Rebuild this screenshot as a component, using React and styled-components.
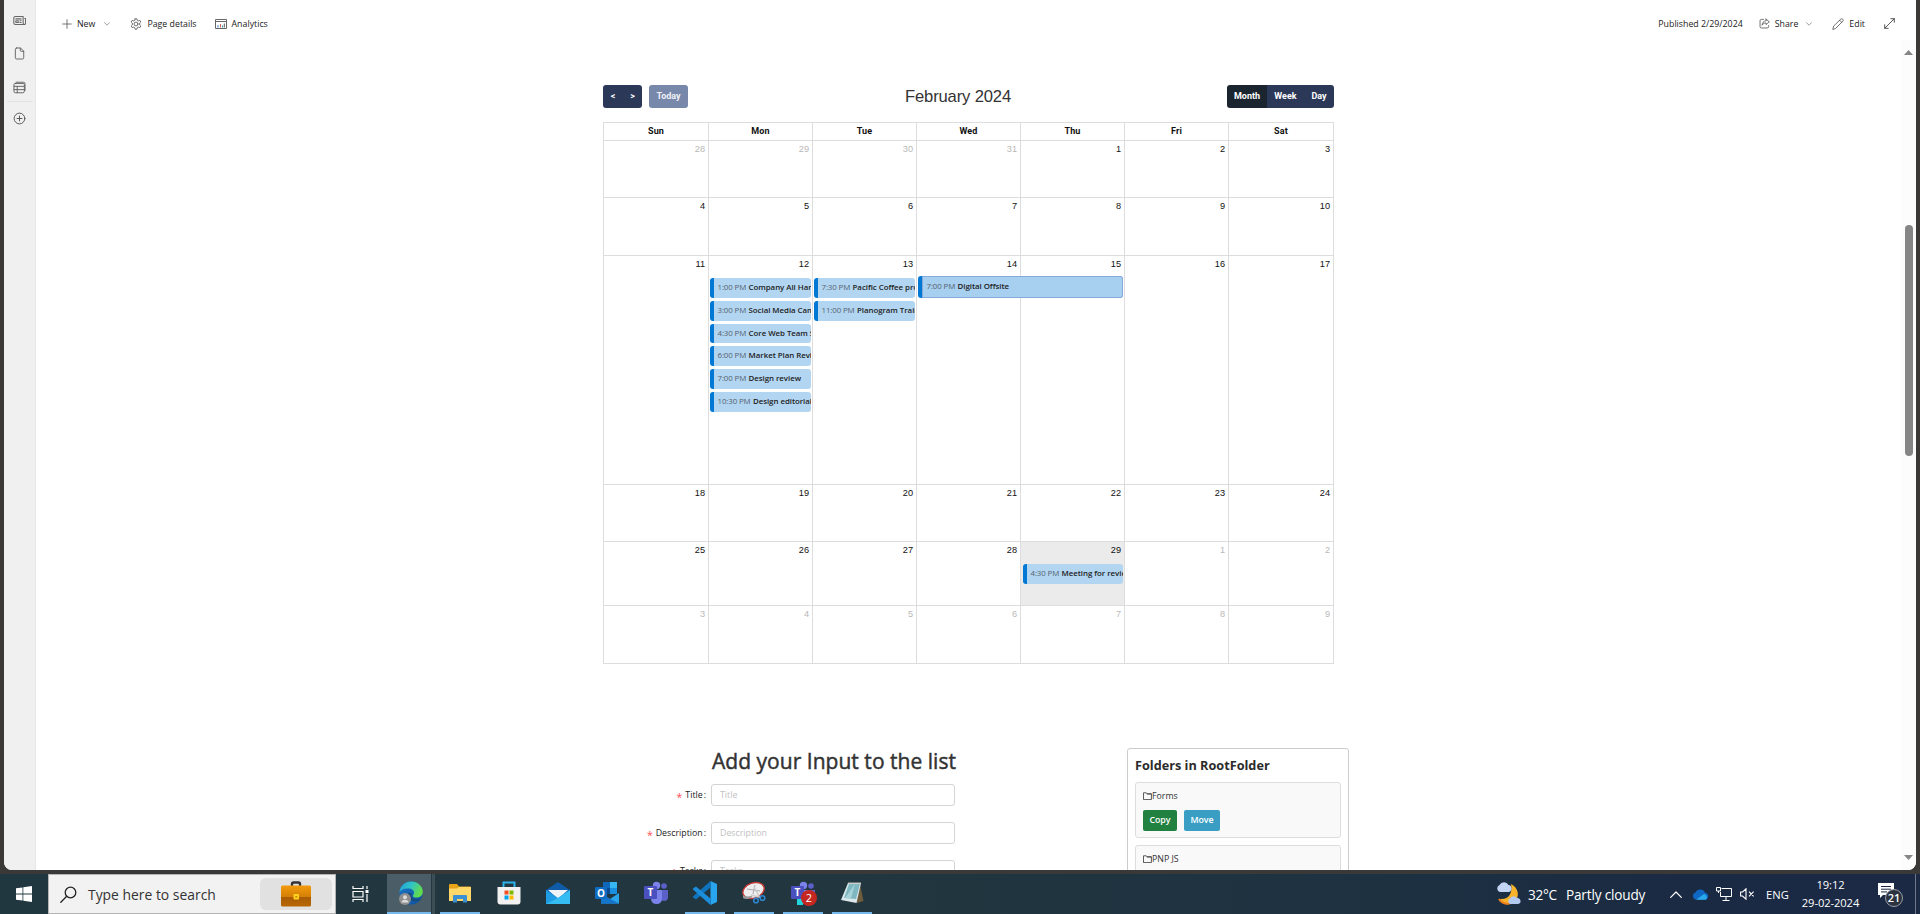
import React from 'react';
import styled, { createGlobalStyle, css } from 'styled-components';

const ui = '"Open Sans", "Noto Sans", sans-serif';
const arial = '"Liberation Sans", Arial, sans-serif';

const Global = createGlobalStyle`
  * { box-sizing: border-box; }
  body { margin: 0; background: #3a3938; font-family: ${ui}; overflow: hidden; }
  button, input { font-family: inherit; margin: 0; }
  svg { display: block; flex: none; }
`;

const Screen = styled.div`
  width: 1920px;
  height: 914px;
  display: flex;
  flex-direction: column;
  background: #3a3938;
  overflow: hidden;
`;

const BrowserWindow = styled.div`
  height: 870px;
  margin: 0 4px 4px;
  display: flex;
  background: #fff;
  border-radius: 0 0 8px 8px;
  overflow: hidden;
  flex: none;
`;

const AppBar = styled.nav`
  width: 32px;
  background: #f0f0f0;
  border-right: 1px solid #e6e6e6;
  display: flex;
  flex-direction: column;
  align-items: center;
`;

const AppBarItem = styled.span`
  height: ${(p) => p.$h}px;
  width: 26px;
  display: flex;
  align-items: center;
  justify-content: center;
  padding-top: ${(p) => (p.$line ? 6 : 0)}px;
  border-bottom: ${(p) => (p.$line ? '1px solid #e2e2e2' : '0')};
`;

const Main = styled.div`
  flex: 1;
  display: flex;
  flex-direction: column;
  min-width: 0;
`;

const CommandBar = styled.header`
  height: 40px;
  flex: none;
  padding: 7px 21px 0 26px;
  display: flex;
  align-items: center;
  justify-content: space-between;
  font-size: 8.8px;
  color: #222;
`;

const CommandGroup = styled.div`
  display: flex;
  align-items: center;
`;

const Command = styled.span`
  display: flex;
  align-items: center;
  gap: 5px;
  margin-left: ${(p) => p.$ml || 0}px;
  white-space: nowrap;
`;

const Body = styled.div`
  flex: 1;
  display: flex;
  min-height: 0;
`;

const Page = styled.main`
  flex: 1;
  padding: 45px 0 0 567px;
  overflow: hidden;
`;

const Scrollbar = styled.div`
  width: 15px;
  background: #fcfcfc;
  display: flex;
  flex-direction: column;
  align-items: center;
  padding: 10px 0 10px;
`;

const Thumb = styled.div`
  width: 8px;
  height: 231px;
  margin-top: 170px;
  margin-bottom: auto;
  border-radius: 4px;
  background: #858585;
`;

const CalendarHeader = styled.div`
  width: 731px;
  height: 23px;
  display: flex;
  justify-content: space-between;
  align-items: center;
  font-family: ${arial};
`;

const ButtonRow = styled.div`
  display: flex;
  gap: 7px;
`;

const ButtonGroup = styled.div`
  display: flex;
  border-radius: 3px;
  overflow: hidden;
`;

const CalButton = styled.button`
  width: ${(p) => p.$w}px;
  height: 23px;
  padding: 0 0 1px;
  border: 0;
  border-radius: ${(p) => (p.$solo ? '3px' : 0)};
  background: ${(p) => (p.$tone === 'active' ? '#1a252f' : p.$tone === 'muted' ? '#7888aa' : '#2b3858')};
  color: ${(p) => (p.$tone === 'muted' ? '#eef0f5' : '#fff')};
  font: 700 9px Roboto, ${arial};
`;

const CalTitle = styled.h2`
  margin: 0 0 0 1px;
  font: 400 16.6px ${arial};
  letter-spacing: -0.15px;
  color: #333;
`;

const CalGrid = styled.div`
  width: 731px;
  margin-top: 14px;
  border-left: 1px solid #ddd;
  border-top: 1px solid #ddd;
  display: grid;
  grid-template-columns: 105px repeat(5, 104px) 105px;
  grid-template-rows: 18px 57px 58px 229px 57px 64px 58px;
`;

const HeadCell = styled.div`
  border-right: 1px solid #ddd;
  border-bottom: 1px solid #ddd;
  font: 700 9px/16px Roboto, ${arial};
  letter-spacing: 0.15px;
  text-align: center;
  color: #111;
`;

const DayCell = styled.div`
  min-width: 0;
  border-right: 1px solid #ddd;
  border-bottom: 1px solid #ddd;
  background: ${(p) => (p.$today ? '#ebebeb' : 'transparent')};
  font-family: ${arial};
`;

const DayNumber = styled.div`
  height: 22px;
  padding-right: 3px;
  font-size: 9.2px;
  line-height: 17px;
  text-align: right;
  color: ${(p) => (p.$muted ? '#b8b8b8' : '#111')};
`;

const EventList = styled.div`
  display: flex;
  flex-direction: column;
  gap: 3px;
  padding: 0 1px 0 ${(p) => (p.$today ? 2 : 1)}px;
`;

const EventChip = styled.div`
  height: 19.8px;
  padding-left: 3.5px;
  border-left: 4px solid #0078d4;
  border-radius: 3px;
  background: #b2d6f2;
  font: 600 7.9px/18px ${ui};
  letter-spacing: -0.05px;
  color: #222;
  white-space: nowrap;
  overflow: hidden;
  ${(p) => p.$wide && css`
    position: relative;
    z-index: 1;
    width: 205px;
    height: 22px;
    margin-top: -2px;
    line-height: 21px;
    padding-left: 4.5px;
    background: #a6cff0;
    box-shadow: inset 0 0 0 1px #86a9dc;
  `}
`;

const EventTime = styled.span`
  font-weight: 400;
  letter-spacing: -0.12px;
  color: #55626e;
  margin-right: 2.4px;
`;

const Lower = styled.div`
  display: flex;
  align-items: flex-start;
  margin-top: 84px;
`;

const Form = styled.form`
  width: 352px;
`;

const FormTitle = styled.h2`
  margin: 0 0 0 109px;
  height: 36px;
  font: 400 21px/26px ${ui};
  letter-spacing: 0.03px;
  -webkit-text-stroke: 0.45px #333;
  color: #333;
  white-space: nowrap;
`;

const Field = styled.label`
  display: flex;
  align-items: center;
  justify-content: flex-end;
  height: 22px;
  margin-bottom: 16px;
  font-size: 8.8px;
  color: #222;
`;

const Star = styled.span`
  color: #ff4d4f;
  height: 10px;
  margin-right: 3px;
  font-size: 10.5px;
  line-height: 14px;
`;

const Colon = styled.span`
  margin-left: 1px;
`;

const Input = styled.input`
  width: 244px;
  height: 22px;
  margin-left: 5px;
  padding: 0 8px 1px;
  border: 1px solid #d4d4d4;
  border-radius: 3px;
  font-size: 8.8px;
  outline: 0;
  &::placeholder { color: #bfbfbf; opacity: 1; }
`;

const FolderCard = styled.section`
  width: 222px;
  height: 300px;
  margin-left: 172px;
  padding: 7px;
  border: 1px solid #ccc;
  border-radius: 3px;
`;

const FolderTitle = styled.h3`
  margin: 0;
  height: 26px;
  font: 700 12.7px/18px ${ui};
  color: #2b2b2b;
`;

const Folder = styled.div`
  height: 56px;
  margin-bottom: 7px;
  padding: 7px;
  border: 1px solid #ddd;
  border-radius: 3px;
  background: #f9f9f9;
`;

const FolderName = styled.div`
  display: flex;
  align-items: center;
  height: 12px;
  margin-bottom: 8px;
  font-size: 8.8px;
  color: #333;
`;

const FolderButton = styled.button`
  width: ${(p) => p.$w}px;
  height: 21px;
  padding: 0 0 1px;
  border: 0;
  border-radius: 2px;
  background: ${(p) => p.$bg};
  color: #fff;
  font: 600 8.8px ${ui};
`;

const Taskbar = styled.footer`
  height: 40px;
  display: flex;
  align-items: center;
  background: linear-gradient(90deg, #21373f 0%, #22363f 45%, #1d3141 72%, #1b2a43 88%, #1b2945 100%);
  color: #fff;
`;

const StartButton = styled.div`
  width: 48px;
  display: flex;
  justify-content: center;
`;

const Search = styled.div`
  width: 288px;
  height: 40px;
  padding: 0 3px 0 11px;
  border: 1px solid #b5b5b5;
  background: #f2f2f2;
  display: flex;
  align-items: center;
  color: #333;
  font-size: 13.9px;
`;

const SearchText = styled.span`
  margin-left: 11px;
  white-space: nowrap;
`;

const SearchArt = styled.span`
  width: 72px;
  height: 32px;
  margin-left: auto;
  border-radius: 6px;
  background: #e1e1e1;
  display: flex;
  align-items: center;
  justify-content: center;
`;

const TaskList = styled.div`
  display: flex;
  gap: 1px;
  margin-left: 3px;
`;

const Task = styled.div`
  width: 48px;
  height: 40px;
  display: flex;
  flex-direction: column;
  align-items: center;
  justify-content: center;
  background: ${(p) => (p.$active ? 'linear-gradient(90deg, #4b5e67 44px, #25383f 44px, #25383f 45px, #3b4d55 45px)' : 'none')};
`;

const TaskIcon = styled.span`
  height: 38px;
  display: flex;
  align-items: center;
`;

const Underline = styled.span`
  width: ${(p) => p.$w || 0}px;
  height: 2px;
  align-self: ${(p) => (p.$start ? 'flex-start' : 'center')};
  background: #76b9ed;
`;

const Tray = styled.div`
  display: flex;
  align-items: center;
  height: 40px;
  margin-left: auto;
  font-size: 13.6px;
  white-space: nowrap;
`;

const TrayItem = styled.span`
  width: ${(p) => p.$w}px;
  font-size: ${(p) => p.$fs || 13.6}px;
  letter-spacing: ${(p) => p.$ls || 0}px;
  flex: none;
`;

const Clock = styled.div`
  width: 73px;
  text-align: center;
  font-size: 11.2px;
  line-height: 18px;
  letter-spacing: -0.1px;
`;

const ActionCenter = styled.div`
  width: 48px;
  padding-left: 10px;
`;

const ShowDesktop = styled.div`
  width: 5px;
  height: 40px;
  border-left: 1px solid #6f7889;
`;

const Line = ({ w = 12, h, vb = '0 0 16 16', sw = 1, color = '#444', children }) => (
  <svg width={w} height={h || w} viewBox={vb} fill="none" stroke={color} strokeWidth={sw} strokeLinecap="round" strokeLinejoin="round">{children}</svg>
);

const ChevronDown = () => <Line w={6} h={4} vb="0 0 6 4" sw={0.7} color="#777"><path d="M.5.7 3 3.2 5.5.7" /></Line>;

const FolderIcon = () => (
  <Line w={9} h={8} vb="0 0 9 8" sw={0.8} color="#333"><path d="M.5 7.2V.8h2.8l.9 1.1h4.2v5.3zM4.2 1.9h4" /></Line>
);

const NewsIcon = () => (
  <Line w={13} sw={1.3} color="#666"><path d="M3 3h9.5v8.5a1.5 1.5 0 0 0 3 0V5.5h-1M3 3a2 2 0 0 0-2 2v6a2 2 0 0 0 2 2h10.8M3.5 6H10M3.5 8.2h3v2.3h-3zM8.5 8.3H10M8.5 10.4H10" /></Line>
);
const FileIcon = () => (
  <Line w={13} sw={1.2} color="#666"><path d="M4.5 1.2h4.7l4 4v8a1.6 1.6 0 0 1-1.6 1.6H4.5a1.6 1.6 0 0 1-1.6-1.6V2.8a1.6 1.6 0 0 1 1.6-1.6zM9 1.4v2.8a1.2 1.2 0 0 0 1.2 1.2H13" /></Line>
);
const ListIcon = () => (
  <Line w={13} sw={1.2} color="#666"><path d="M3.8 1.5H13a1.8 1.8 0 0 1 1.8 1.8v8.5M3 3h9.5a1.5 1.5 0 0 1 1.5 1.5v8a2 2 0 0 1-2 2H3a1.8 1.8 0 0 1-1.8-1.8V4.5A1.5 1.5 0 0 1 3 3zM1.2 6.6H14M1.2 10.6H14M5.2 6.6v7.8" /></Line>
);
const AddIcon = () => (
  <Line w={13} sw={1.2} color="#555"><circle cx="8" cy="8" r="6.6" /><path d="M8 5v6M5 8h6" /></Line>
);
const PlusIcon = () => <Line w={10} vb="0 0 10 10" sw={0.9} color="#666"><path d="M5 .7v8.6M.7 5h8.6" /></Line>;
const GearIcon = () => (
  <Line w={12} sw={1.1} color="#555"><circle cx="8" cy="8" r="2.6" /><path d="M6.800 1h2.400l.4 2 1.600.9 2-.7 1.200 2.100-1.500 1.400v2.600l1.500 1.400-1.200 2.100-2-.7-1.600.9-.4 2H6.800l-.4-2-1.600-.9-2 .7-1.200-2.100 1.500-1.400V6.700L1.600 5.300l1.200-2.100 2 .7L6.400 3z" /></Line>
);
const AnalyticsIcon = () => (
  <svg width="12" height="10" viewBox="0 0 12 10" fill="none">
    <path d="M.5.5h11v9H.5zM.5 2.5h11" stroke="#666" />
    <path d="M3 6v2.5" stroke="#3b7fc4" /><path d="M5.500 5v3.500" stroke="#c65" /><path d="M7.500 6.500v2" stroke="#2a9fb0" /><path d="M9.300 4.500v4" stroke="#555" />
  </svg>
);
const ShareIcon = () => (
  <Line w={11} sw={1.2} color="#555"><path d="M6.5 2H3.500A2 2 0 0 0 1.500 4v8.500a2 2 0 0 0 2 2h8.500a2 2 0 0 0 2-2V11M10.200 1.500l4.800 4-4.800 4V7.200C7.500 7.200 5.800 8.200 4.500 10.500c.2-3.500 2-6.300 5.700-6.600z" /></Line>
);
const PencilIcon = () => (
  <Line w={12} sw={1.1} color="#555"><path d="m1.200 14.800 1-4L11.500 1.600a1.900 1.900 0 0 1 2.800 2.800L5 13.700zM10.200 3l2.800 2.800" /></Line>
);
const ExpandIcon = () => (
  <Line w={11} vb="0 0 11 11" sw={0.9} color="#444"><path d="M.7 10.300 10.300.700M6.800.700h3.500v3.500M.7 6.800v3.500h3.500" /></Line>
);

const WindowsLogo = () => (
  <svg width="16" height="16" viewBox="0 0 16 16" fill="#fff"><path d="M0 2.300 6.500 1.400v6.200H0zM7.300 1.300 16 0v7.600H7.300zM0 8.400h6.500v6.200L0 13.700zM7.300 8.400H16V16l-8.700-1.300z" /></svg>
);
const SearchIcon = () => <Line w={17} vb="0 0 17 17" sw={1.3} color="#222"><circle cx="10.500" cy="6.500" r="5.300" /><path d="M6.700 10.300.8 16.200" /></Line>;
const Briefcase = () => (
  <svg width="30" height="26" viewBox="0 0 30 26">
    <defs><linearGradient id="bc" x2="0" y2="1"><stop stopColor="#f39a0c" /><stop offset=".55" stopColor="#d47f06" /><stop offset=".56" stopColor="#a95c04" /><stop offset="1" stopColor="#b96705" /></linearGradient></defs>
    <path d="M11 5V3q0-1.500 1.500-1.500h5Q19 1.500 19 3v2" fill="none" stroke="#333" strokeWidth="2.400" />
    <rect y="4.500" width="30" height="21" rx="1.500" fill="url(#bc)" /><rect x="12.500" y="13" width="5.500" height="5.500" rx="1" fill="#ffd21f" /><rect x="14.300" y="15" width="2" height="1.600" fill="#c88a00" />
  </svg>
);
const TaskViewIcon = () => (
  <svg width="17" height="16" viewBox="0 0 17 16" fill="none" stroke="#fff" strokeWidth="1.200"><path d="M1 0v2.500h10V0M1 5.500h10v5.500H1zM1 16v-2.500h10V16M15 0v3M15 8v8" /><path d="M13.500 5.500h3" strokeWidth="3" /></svg>
);
const EdgeIcon = () => (
  <svg width="24" height="24" viewBox="0 0 24 24">
    <defs>
      <linearGradient id="e1" x2="1" y2=".4"><stop stopColor="#2796d8" /><stop offset=".5" stopColor="#2fc3c8" /><stop offset="1" stopColor="#62dc4c" /></linearGradient>
      <linearGradient id="e2" x2="1" y2="1"><stop stopColor="#1b78c8" /><stop offset="1" stopColor="#0c4f9c" /></linearGradient>
    </defs>
    <circle cx="12" cy="12" r="11.500" fill="url(#e2)" />
    <path d="M.5 11.500C1 4.500 6 .5 12 .5c7 0 11.800 5 11.800 10 0 4-3 6-6 6-2.800 0-4.300-1-4-1.800.4-.8 1.200-1.400 1.200-3 0-2.400-2.400-4.200-5.500-4.200C5 7.500 1.500 9 .5 11.500z" fill="url(#e1)" />
    <path d="M9 12c-1.500 5 3 9.500 11 7.500l2-1.500c-4 1.600-8.500.5-9.500-2.500-.4-1.600 0-2.300.5-3z" fill="#22363f" opacity=".55" />
    <circle cx="6" cy="18" r="6" fill="#8f8f8f" /><circle cx="6" cy="16.200" r="2" fill="#ddd" /><path d="M2.500 21.500c0-3.800 7-3.800 7 0z" fill="#ddd" />
  </svg>
);
const ExplorerIcon = () => (
  <svg width="22" height="19" viewBox="0 0 22 19"><path d="M0 1q0-1 1-1h7l2 2.500h11q1 0 1 1V17H0z" fill="#e8a317" /><path d="M0 4.500h8l2-1.500h12v14H0z" fill="#ffd869" /><path d="M4 18.500V12q0-1 1-1h12q1 0 1 1v6.500h-4V15H8v3.500z" fill="#3d8fd4" /></svg>
);
const StoreIcon = () => (
  <svg width="24" height="24" viewBox="0 0 24 24"><path d="M6.500 7V1.500h11V7" fill="none" stroke="#2bb3ea" strokeWidth="2" /><path d="M.5 6h23v14.500q0 3-3 3h-17q-3 0-3-3z" fill="#f1f1f1" /><path fill="#f25022" d="M7.500 9.500h4v4h-4z" /><path fill="#7fba00" d="M12.500 9.500h4v4h-4z" /><path fill="#00a4ef" d="M7.500 14.500h4v4h-4z" /><path fill="#ffb900" d="M12.500 14.500h4v4h-4z" /></svg>
);
const MailIcon = () => (
  <svg width="24" height="22" viewBox="0 0 24 22"><path d="M0 8 12 0l12 8v5H0z" fill="#0f5ba8" /><path d="M2 8h20l-9 8h-2z" fill="#eef3f8" /><path d="M0 8l12 8 12-8v14H0z" fill="#1f9ce4" /><path d="m24 8-12 8-12 6h24z" fill="#35bdf3" /></svg>
);
const IconLetter = styled.text`
  font: ${(p) => p.$weight || 700} ${(p) => p.$s || 9}px ${ui};
  fill: #fff;
  text-anchor: middle;
`;
const OutlookIcon = () => (
  <svg width="24" height="22" viewBox="0 0 24 22"><path d="M8 0h14v12H8z" fill="#1066b8" /><path d="M15 0h7v6h-7z" fill="#35b8f1" /><path d="M8 6h7v6H8z" fill="#0a4a90" /><path d="M15 6h7v6h-7z" fill="#1a8fdf" /><path d="M6 12l9 5 9-6v10.500H6z" fill="#2aa5ea" /><path d="m6 12 18 9.500H6z" fill="#1475cc" /><rect y="5" width="12" height="12" rx="1" fill="#0f6cc0" /><IconLetter x="6" y="14.500" $s={10}>O</IconLetter></svg>
);
const TeamsIcon = ({ badge }) => (
  <svg width="26" height="25" viewBox="0 0 26 25" overflow="visible">
    <circle cx="13.500" cy="4.500" r="3.700" fill="#7b83eb" /><circle cx="21" cy="5" r="2.800" fill="#5b60c9" /><path d="M17 9h8v7q0 4-4 4-3 0-4-2z" fill="#5b60c9" /><path d="M8 9h11v8q0 6-5.500 6T8 17z" fill="#7b83eb" /><rect x="1" y="5" width="13" height="13" rx="1" fill="#4a50bd" /><IconLetter x="7.500" y="15" $s={10}>T</IconLetter>
    {badge && <><rect x="7" y="18" width="6" height="6" fill="#20d5dc" /><circle cx="19" cy="17" r="8" fill="#c4271f" /><IconLetter x="19" y="21" $s={11} $weight={400}>2</IconLetter></>}
  </svg>
);
const CodeIcon = () => (
  <svg width="24" height="24" viewBox="0 0 24 24"><path d="M17.500 0 24 3v18l-6.500 3z" fill="#28a5ee" /><path d="M17.500 0v6.500L3 18.500 0 16.500v-1z" fill="#0f74bd" /><path d="M17.500 24v-6.500L3 5.500 0 7.500v1z" fill="#1b8edb" /></svg>
);
const SnipIcon = () => (
  <svg width="24" height="24" viewBox="0 0 24 24"><ellipse cx="11.500" cy="9.500" rx="11" ry="7.500" transform="rotate(-20 11.500 9.500)" fill="#eee" stroke="#c63a35" strokeWidth="1.400" /><path d="m5 8 13 2M13 4l-2 9" stroke="#aaa" /><path d="M1 14q3 3 10 0l-2 3q-5 2-8 0z" fill="#999" /><path d="m12 6 6 11M9 14l8 2" stroke="#ccc" strokeWidth="1.500" /><circle cx="14" cy="19.500" r="2.300" fill="none" stroke="#2c87cf" strokeWidth="1.600" /><circle cx="20.500" cy="17" r="2.300" fill="none" stroke="#2c87cf" strokeWidth="1.600" /></svg>
);
const NotepadIcon = () => (
  <svg width="23" height="22" viewBox="0 0 23 22"><path d="m19 2 3.500 17-7 2z" fill="#6d5c3c" /><path d="M7 1h13l-4.500 20L0 18z" fill="#dbe9ec" /><path d="M8 2h11l-4 15-12-1z" fill="#7fb7c1" /><path d="m14 2-10 14 6 .6z" fill="#a6d2d8" /><path d="M7 1.300h13" stroke="#ccc" strokeWidth="1.500" /></svg>
);
const WeatherIcon = () => (
  <svg width="25" height="24" viewBox="0 0 25 24"><path d="M15 2c8 4 9 13 3 18-5 4-12 2-14-3 8 1 13-5 11-15z" fill="#f7b32b" /><path d="M3 17c3 5 9 6 14 3" stroke="#ee7f1b" strokeWidth="2" fill="none" /><path d="M4 10a3.700 3.700 0 0 1-.5-7 5 5 0 0 1 9 0A3.600 3.600 0 0 1 13 10z" fill="#c3d5f4" /><path d="M14 22a3 3 0 0 1 0-5.500 4 4 0 0 1 7-.5 3 3 0 0 1 1 6z" fill="#b3c9ef" /></svg>
);
const CloudIcon = () => (
  <svg width="17" height="11" viewBox="0 0 17 11"><path d="M4 10.500A3.600 3.600 0 0 1 3.500 3.500 5.200 5.200 0 0 1 13 3.700a3.500 3.500 0 0 1 .8 6.800z" fill="#0f66c3" /><path d="M4 10.700 12 5a3.400 3.400 0 0 1 2 5.700z" fill="#28a8ea" /></svg>
);
const MonitorIcon = () => (
  <svg width="17" height="14" viewBox="0 0 17 14" fill="none" stroke="#fff"><path d="M5.500 1.500h10v8h-11V5M10 10v3M6.500 13.500h7" /><path d="M.5.500h4v3.500h-4zM2.500 4v2" /></svg>
);
const SpeakerIcon = () => (
  <svg width="15" height="12" viewBox="0 0 15 12" fill="none" stroke="#fff" strokeWidth="1.100"><path d="M.6 4h2L6 .8v10.400L2.600 8h-2zM9 3.700l4.600 4.600M13.600 3.700 9 8.300" /></svg>
);
const NotificationIcon = () => (
  <svg width="27" height="25" viewBox="0 0 27 25"><path d="M1 1h16v12H6l-3 3v-3H1z" fill="#fff" /><path d="M4 4.500h10M4 7.200h10M4 9.900h6" stroke="#1b2945" /><circle cx="17" cy="16" r="8.500" fill="#2b3340" stroke="#9a9ea6" /><IconLetter x="17" y="20" $s={11} $weight={600}>21</IconLetter></svg>
);

const weeks = [
  [28, 29, 30, 31, 1, 2, 3],
  [4, 5, 6, 7, 8, 9, 10],
  [11, 12, 13, 14, 15, 16, 17],
  [18, 19, 20, 21, 22, 23, 24],
  [25, 26, 27, 28, 29, 1, 2],
  [3, 4, 5, 6, 7, 8, 9],
];
const outside = (w, d) => (w === 0 && d > 20) || (w >= 4 && d < 20);
const events = {
  '2-12': [['1:00 PM', 'Company All Hands'], ['3:00 PM', 'Social Media Campaign'], ['4:30 PM', 'Core Web Team Sync'], ['6:00 PM', 'Market Plan Review'], ['7:00 PM', 'Design review'], ['10:30 PM', 'Design editorial']],
  '2-13': [['7:30 PM', 'Pacific Coffee promo'], ['11:00 PM', 'Planogram Training']],
  '2-14': [['7:00 PM', 'Digital Offsite', true]],
  '4-29': [['4:30 PM', 'Meeting for review']],
};

const tasks = [
  { icon: <EdgeIcon />, active: true, line: 44, start: true },
  { icon: <ExplorerIcon />, line: 40 },
  { icon: <StoreIcon /> },
  { icon: <MailIcon /> },
  { icon: <OutlookIcon /> },
  { icon: <TeamsIcon /> },
  { icon: <CodeIcon />, line: 40 },
  { icon: <SnipIcon />, line: 40 },
  { icon: <TeamsIcon badge />, line: 40 },
  { icon: <NotepadIcon />, line: 40 },
];

function Calendar() {
  return (
    <>
      <CalendarHeader>
        <ButtonRow>
          <ButtonGroup><CalButton $w={20}>&lt;</CalButton><CalButton $w={19}>&gt;</CalButton></ButtonGroup>
          <CalButton $w={39} $tone="muted" $solo>Today</CalButton>
        </ButtonRow>
        <CalTitle>February 2024</CalTitle>
        <ButtonGroup>
          <CalButton $w={40} $tone="active">Month</CalButton>
          <CalButton $w={37}>Week</CalButton>
          <CalButton $w={30}>Day</CalButton>
        </ButtonGroup>
      </CalendarHeader>
      <CalGrid>
        {['Sun', 'Mon', 'Tue', 'Wed', 'Thu', 'Fri', 'Sat'].map((d) => <HeadCell key={d}>{d}</HeadCell>)}
        {weeks.map((week, w) => week.map((d) => {
          const today = w === 4 && d === 29;
          return (
            <DayCell key={`${w}-${d}`} $today={today}>
              <DayNumber $muted={outside(w, d)}>{d}</DayNumber>
              <EventList $today={today}>
                {(events[`${w}-${d}`] || []).map(([time, name, wide]) => (
                  <EventChip key={name} $wide={wide}><EventTime>{time}</EventTime>{name}</EventChip>
                ))}
              </EventList>
            </DayCell>
          );
        }))}
      </CalGrid>
    </>
  );
}

export default function App() {
  return (
    <Screen>
      <Global />
      <BrowserWindow>
        <AppBar>
          <AppBarItem $h={40}><NewsIcon /></AppBarItem>
          <AppBarItem $h={27}><FileIcon /></AppBarItem>
          <AppBarItem $h={35} $line><ListIcon /></AppBarItem>
          <AppBarItem $h={33}><AddIcon /></AppBarItem>
        </AppBar>
        <Main>
          <CommandBar>
            <CommandGroup>
              <Command><PlusIcon />New</Command>
              <Command $ml={9}><ChevronDown /></Command>
              <Command $ml={20}><GearIcon />Page details</Command>
              <Command $ml={18}><AnalyticsIcon />Analytics</Command>
            </CommandGroup>
            <CommandGroup>
              <Command>Published 2/29/2024</Command>
              <Command $ml={16}><ShareIcon />Share</Command>
              <Command $ml={8}><ChevronDown /></Command>
              <Command $ml={20}><PencilIcon />Edit</Command>
              <Command $ml={19}><ExpandIcon /></Command>
            </CommandGroup>
          </CommandBar>
          <Body>
            <Page>
              <Calendar />
              <Lower>
                <Form>
                  <FormTitle>Add your Input to the list</FormTitle>
                  {['Title', 'Description', 'Tasks'].map((f) => (
                    <Field key={f}><Star>*</Star>{f}<Colon>:</Colon><Input placeholder={f} /></Field>
                  ))}
                </Form>
                <FolderCard>
                  <FolderTitle>Folders in RootFolder</FolderTitle>
                  {['Forms', 'PNP JS'].map((f) => (
                    <Folder key={f}>
                      <FolderName><FolderIcon />{f}</FolderName>
                      <ButtonRow>
                        <FolderButton $w={34} $bg="#218141">Copy</FolderButton>
                        <FolderButton $w={36} $bg="#3a9ec4">Move</FolderButton>
                      </ButtonRow>
                    </Folder>
                  ))}
                </FolderCard>
              </Lower>
            </Page>
            <Scrollbar>
              <svg width="9" height="5" viewBox="0 0 9 5" fill="#858585"><path d="M4.500 0 9 5H0z" /></svg>
              <Thumb />
              <svg width="9" height="5" viewBox="0 0 9 5" fill="#858585"><path d="M4.500 5 9 0H0z" /></svg>
            </Scrollbar>
          </Body>
        </Main>
      </BrowserWindow>
      <Taskbar>
        <StartButton><WindowsLogo /></StartButton>
        <Search><SearchIcon /><SearchText>Type here to search</SearchText><SearchArt><Briefcase /></SearchArt></Search>
        <StartButton><TaskViewIcon /></StartButton>
        <TaskList>
          {tasks.map((t, i) => (
            <Task key={i} $active={t.active}>
              <TaskIcon>{t.icon}</TaskIcon>
              <Underline $w={t.line} $start={t.start} />
            </Task>
          ))}
        </TaskList>
        <Tray>
          <TrayItem $w={32}><WeatherIcon /></TrayItem>
          <TrayItem $w={38} $ls={-0.3}>32°C</TrayItem>
          <TrayItem $w={104} $ls={-0.18}>Partly cloudy</TrayItem>
          <TrayItem $w={22}><Line w={12} h={7} vb="0 0 12 7" sw={1.2} color="#fff"><path d="m.7 6.300 5.300-5.300 5.300 5.300" /></Line></TrayItem>
          <TrayItem $w={24}><CloudIcon /></TrayItem>
          <TrayItem $w={24}><MonitorIcon /></TrayItem>
          <TrayItem $w={26}><SpeakerIcon /></TrayItem>
          <TrayItem $w={28} $fs={11.2}>ENG</TrayItem>
          <Clock>19:12<br />29-02-2024</Clock>
          <ActionCenter><NotificationIcon /></ActionCenter>
          <ShowDesktop />
        </Tray>
      </Taskbar>
    </Screen>
  );
}
